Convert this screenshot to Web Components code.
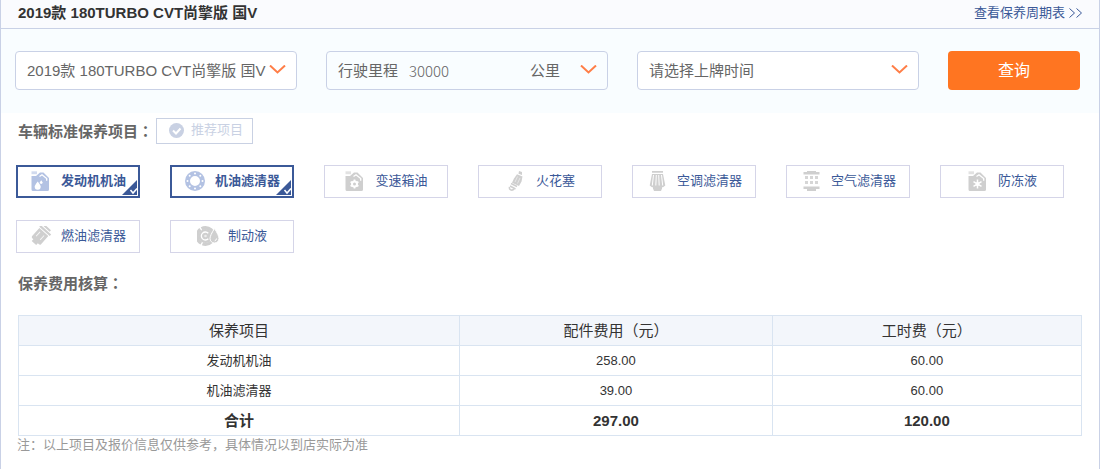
<!DOCTYPE html>
<html lang="zh-CN">
<head>
    <meta charset="UTF-8">
    <title>保养费用</title>
    <style>
        body {
            margin: 0;
            background: #fff;
            color: #333;
            font: 13px/20px "Liberation Sans", "Noto Sans CJK SC", sans-serif;
        }
    </style>
</head>
<body>

<template id="panel-tpl">
    <style>
        :host {
            display: block;
            box-sizing: border-box;
            min-height: 100vh;
            margin-right: 1px;
            border: solid #c9d1e6;
            border-width: 0 1px;
        }

        header {
            display: flex;
            justify-content: space-between;
            align-items: center;
            padding: 0 17px 2px;
            height: 26px;
            background: #fafbfe;
            border-bottom: 1px solid #c9d1e6;
        }
    </style>
    <header>
        <slot name="title"></slot>
        <slot name="link"></slot>
    </header>
    <slot></slot>
</template>

<template id="title-tpl">
    <style>
        :host {
            display: block;
            font-size: 15px;
            font-weight: bold;
        }

        h2 {
            margin: 0;
            font: inherit;
        }
    </style>
    <h2><slot></slot></h2>
</template>

<template id="link-tpl">
    <style>
        :host {
            display: block;
        }

        a {
            display: flex;
            gap: 4px;
            color: #3b5998;
            text-decoration: none;
        }
    </style>
    <a href="#cycle"><slot></slot><svg width="13" height="20" viewBox="0 0 13 20" fill="none" stroke="currentColor" aria-hidden="true"><path d="M.5 5.500l5 4.500-5 4.500M7.500 5.500l5 4.500-5 4.500"/></svg></a>
</template>

<template id="search-tpl">
    <style>
        :host {
            display: block;
            background: #f9fdff;
        }

        form {
            display: grid;
            grid-template-columns: repeat(3, minmax(0, 1fr)) 132px;
            gap: 29px;
            padding: 22px 19px 23px 14px;
        }

        button {
            height: 39px;
            padding: 0;
            border: 0;
            border-radius: 4px;
            background: #ff7521;
            color: #fff;
            font: inherit;
            font-size: 16px;
            cursor: pointer;
        }
    </style>
    <form onsubmit="return false">
        <slot></slot>
        <button>查询</button>
    </form>
</template>

<template id="select-tpl">
    <style>
        :host {
            display: grid;
            align-items: center;
            height: 37px;
            border: 1px solid #c9d1e6;
            border-radius: 4px;
            background: #fff;
        }

        select, svg {
            grid-area: 1 / 1;
        }

        select {
            width: 100%;
            height: 37px;
            padding: 0 11px;
            border: 0;
            outline: 0;
            appearance: none;
            background: none;
            color: #666;
            font: inherit;
            font-size: 15px;
        }

        svg {
            justify-self: end;
            margin-right: 10px;
            pointer-events: none;
        }
    </style>
    <select></select>
    <svg width="17" height="12" viewBox="0 0 17 12" fill="none" stroke="#ff7e47" stroke-width="2" aria-hidden="true"><path d="M1 .5l7.500 7L16 .5"/></svg>
</template>

<template id="mileage-tpl">
    <style>
        :host {
            display: flex;
            align-items: center;
            height: 37px;
            padding: 0 10px 0 11px;
            border: 1px solid #c9d1e6;
            border-radius: 4px;
            color: #666;
            font-size: 15px;
        }

        input {
            flex: 1;
            min-width: 0;
            padding: 0;
            margin: 0 11px;
            border: 0;
            outline: 0;
            background: none;
            color: #666;
            font: 300 15px/20px "Noto Sans CJK SC", sans-serif;
        }

        svg {
            margin-left: 20px;
        }
    </style>
    <label for="mileage">行驶里程</label>
    <input id="mileage" type="text" value="30000">
    <span>公里</span>
    <svg width="17" height="12" viewBox="0 0 17 12" fill="none" stroke="#ff7e47" stroke-width="2" aria-hidden="true"><path d="M1 .5l7.500 7L16 .5"/></svg>
</template>

<template id="section-tpl">
    <style>
        :host {
            display: block;
            padding: 4px 17px 0;
        }

        .head {
            display: flex;
            align-items: center;
            height: 28px;
        }

        h3 {
            margin: 0;
            color: #666;
            font-size: 15px;
        }

        /* full-width colon sits in the middle of its box */
        h3 span {
            font-family: "Noto Sans CJK TC", sans-serif;
        }
    </style>
    <div class="head">
        <h3><slot name="name"></slot><span lang="zh-TW">：</span></h3>
        <slot name="action"></slot>
    </div>
    <slot></slot>
</template>

<template id="recommend-tpl">
    <style>
        :host {
            display: block;
            margin-left: 3px;
        }

        button {
            display: flex;
            align-items: center;
            gap: 6px;
            height: 26px;
            padding: 0 9px 2px 11px;
            border: 1px solid #c9d1e3;
            background: #fff;
            color: #c9d1e3;
            font: inherit;
        }
    </style>
    <button type="button"><svg width="17" height="16" viewBox="0 0 17 16" aria-hidden="true"><circle cx="8.500" cy="8.500" r="7.500" fill="#c9d1e3"/><path d="M5 8.500l3 3 4.500-5" fill="none" stroke="#fff" stroke-width="2"/></svg><slot></slot></button>
</template>

<template id="list-tpl">
    <style>
        :host {
            display: grid;
            grid-template-columns: repeat(auto-fill, 124px);
            gap: 22px 30px;
            margin: 20px 0 17px -2px;
        }
    </style>
    <slot></slot>
</template>

<template id="item-tpl">
    <style>
        :host {
            display: block;
        }

        label {
            display: flex;
            position: relative;
            box-sizing: border-box;
            justify-content: center;
            align-items: center;
            gap: 9px;
            height: 33px;
            padding-bottom: 2px;
            border: 1px solid #d5d5e8;
            color: #3b5998;
            white-space: nowrap;
            cursor: pointer;
        }

        input {
            position: absolute;
            opacity: 0;
            margin: 0;
        }

        .icon {
            flex: none;
            color: #cfcfcf;
        }

        .corner {
            display: none;
            position: absolute;
            right: 1px;
            bottom: 1px;
        }

        label:has(:checked) {
            border: 2px solid #3b5998;
            font-weight: bold;
        }

        :checked ~ .icon {
            color: #b3c2e3;
        }

        :checked ~ .corner {
            display: block;
        }
    </style>
    <label>
        <input type="checkbox">
        <svg class="icon" width="22" height="20" viewBox="0 0 22 20" fill="currentColor" aria-hidden="true"></svg>
        <slot></slot>
        <svg class="corner" width="15" height="15" viewBox="0 0 15 15" aria-hidden="true"><path d="M15 0v15H0z" fill="#3b5998"/><path d="M8.500 10l2.500 3 4-4.500" fill="none" stroke="#fff" stroke-width="1.500"/></svg>
    </label>
</template>

<template id="cost-tpl">
    <style>
        :host {
            display: block;
            margin-top: 18px;
        }

        table {
            width: 100%;
            border-collapse: collapse;
            table-layout: fixed;
            text-align: center;
        }

        th, td {
            height: 29px;
            padding: 0;
            border: 1px solid #d9e4f1;
        }

        th {
            background: #f3f6fb;
            font-size: 15px;
            font-weight: normal;
        }

        th:first-child {
            width: 41.4%;
        }

        th:last-child {
            width: 29%;
        }

        tfoot td {
            font-size: 15px;
            font-weight: bold;
        }

        p {
            margin: -1px 0 0 -1px;
            color: #999;
        }
    </style>
    <table>
        <thead>
        <tr>
            <th>保养项目</th>
            <th>配件费用（元）</th>
            <th>工时费（元）</th>
        </tr>
        </thead>
        <tbody></tbody>
        <tfoot></tfoot>
    </table>
    <p><slot></slot></p>
</template>

<service-panel>
    <panel-title slot="title">2019款 180TURBO CVT尚擎版 国V</panel-title>
    <more-link slot="link">查看保养周期表</more-link>
    <search-bar>
        <select-box label="车型" text="2019款 180TURBO CVT尚擎版 国V"></select-box>
        <mileage-box></mileage-box>
        <select-box label="上牌时间" text="请选择上牌时间"></select-box>
    </search-bar>
    <panel-section>
        <span slot="name">车辆标准保养项目</span>
        <recommend-button slot="action">推荐项目</recommend-button>
        <item-list>
            <service-item icon="oil" checked>发动机机油</service-item>
            <service-item icon="filter" checked>机油滤清器</service-item>
            <service-item icon="gearbox">变速箱油</service-item>
            <service-item icon="plug">火花塞</service-item>
            <service-item icon="cabin">空调滤清器</service-item>
            <service-item icon="air">空气滤清器</service-item>
            <service-item icon="coolant">防冻液</service-item>
            <service-item icon="fuel">燃油滤清器</service-item>
            <service-item icon="brake">制动液</service-item>
        </item-list>
    </panel-section>
    <panel-section style="padding-top: 0; margin-top: -1px">
        <span slot="name">保养费用核算</span>
        <cost-table>注：以上项目及报价信息仅供参考，具体情况以到店实际为准</cost-table>
    </panel-section>
</service-panel>

<script>
    const can = '<path d="M1.500.3H7v2.900H1.500z" opacity=".6"/><path d="M1.500 5h4.500L10 1.500h3.500L19 7v11.500q0 1.500-1.500 1.500H3q-1.500 0-1.500-1.500z"/><path d="M9.500 5.500L12 3.800l4.700 3.700v2.300" fill="none" stroke="#fff" stroke-width="1.300"/>';

    const icons = {
        oil: can + '<path d="M7.700 10.500q3 3.700 3 5.200a3 3 0 0 1-6 0q0-1.500 3-5.200z" fill="#fff"/><path d="M11.200 9.200q1.400 1.700 1.400 2.400a1.400 1.400 0 0 1-2.800 0q0-.7 1.400-2.400z" fill="#fff"/>',
        filter: '<circle cx="11" cy="10" r="7.500" fill="none" stroke="currentColor" stroke-width="5"/><g fill="#fff"><circle cx="11" cy="2.500" r="1"/><circle cx="16.300" cy="4.700" r="1"/><circle cx="18.500" cy="10" r="1"/><circle cx="16.300" cy="15.300" r="1"/><circle cx="11" cy="17.500" r="1"/><circle cx="5.700" cy="15.300" r="1"/><circle cx="3.500" cy="10" r="1"/><circle cx="5.700" cy="4.700" r="1"/></g>',
        gearbox: can + '<circle cx="10.500" cy="13" r="2.500" fill="none" stroke="#fff" stroke-width="2"/><path d="M10.500 8.500v2m0 5v2M6.600 10.700l1.700 1m4.400 2.600l1.700 1m0-4.600l-1.700 1m-4.400 2.600l-1.700 1" fill="none" stroke="#fff" stroke-width="1.800"/>',
        plug: '<path d="M14 0l3 1v3l-3.500-1.200z"/><path d="M12 3.200l5.500 2.300-1 5-2.500 4.500-7-3.200 2-4.300z"/><path d="M6 12.500l6 3M5 15l5.500 3" stroke="currentColor" stroke-width="1.500"/><path d="M4.500 16q-.5 2.500 1.500 3t3-1" fill="none" stroke="currentColor" stroke-width="1.500"/><path d="M12.500 5.500L10 11m5-4l-2.500 5.500" stroke="#fff" opacity=".5"/>',
        cabin: '<path d="M6 0h11v1.700H6zM6 3h11l2.300 11.500-2.300 1.800H6l-2.300-1.800z"/><path d="M7 16h9v1.500l-1 2.500H8l-1-2.500z"/><path d="M7.500 4L6.300 14.500M10.300 4l-.5 10.500M12.700 4l.5 10.500M15.500 4l1.200 10.500" stroke="#fff" stroke-width="1"/>',
        air: '<path d="M7 0h9v1h3.500v2.500h-16V1H7zM3.500 15.500h16V18H16v2H7v-2H3.500z"/><g opacity=".85"><path d="M5 5h3v3H5zm5 0h3v3h-3zm5 0h3v3h-3zM5 10h3v3H5zm5 0h3v3h-3zm5 0h3v3h-3z"/></g>',
        coolant: can + '<path d="M10.500 8.500v9M6.500 10.700l8 4.600m0-4.600l-8 4.600" stroke="#fff" stroke-width="1.500"/><circle cx="10.500" cy="13" r="2" fill="#fff"/>',
        fuel: '<g transform="rotate(42 11 10)"><path d="M6.500-1h8v2h-8zM3.500 2h14v2.200h-14z"/><path d="M4.500 5.200h12V16q0 1.500-1.500 1.500h-1.500V20h-6v-2.500H6q-1.500 0-1.500-1.500z"/><path d="M7.500 7.500v6m5.500-6v6" stroke="#fff" opacity=".8"/></g>',
        brake: '<circle cx="8.500" cy="10" r="8.300" fill="none" stroke="currentColor" stroke-width="3.400" stroke-dasharray="16 1.380"/><circle cx="8.500" cy="10" r="7"/><path d="M11.300 7.300a4 4 0 1 0 0 5.400" fill="none" stroke="#fff" stroke-width="1.300"/><circle cx="8.500" cy="10" r="1.300" fill="#fff" opacity=".6"/><path d="M17.500 2.500q4.500 7 4.500 10a4.500 4.500 0 0 1-9 0q0-3 4.500-10z" stroke="#fff"/><path d="M19.500 12.500q0 1.800-1.800 2.300" fill="none" stroke="#fff"/>'
    };

    const costs = [
        ['发动机机油', 258, 60],
        ['机油滤清器', 39, 60]
    ];

    class BaseElement extends HTMLElement {
        constructor() {
            super();
            const tpl = document.getElementById(this.constructor.tpl);
            this.attachShadow({mode: 'open'}).appendChild(document.importNode(tpl.content, true));
        }
    }

    class SelectBox extends BaseElement {
        static tpl = 'select-tpl';

        connectedCallback() {
            const select = this.shadowRoot.querySelector('select');
            select.setAttribute('aria-label', this.getAttribute('label'));
            select.replaceChildren(new Option(this.getAttribute('text')));
        }
    }

    class ServiceItem extends BaseElement {
        static tpl = 'item-tpl';

        connectedCallback() {
            this.shadowRoot.querySelector('input').checked = this.hasAttribute('checked');
            this.shadowRoot.querySelector('.icon').innerHTML = icons[this.getAttribute('icon')];
        }
    }

    class CostTable extends BaseElement {
        static tpl = 'cost-tpl';

        connectedCallback() {
            const row = (name, parts, work) =>
                `<tr><td>${name}</td><td>${parts.toFixed(2)}</td><td>${work.toFixed(2)}</td></tr>`;
            const sum = (i) => costs.reduce((total, cost) => total + cost[i], 0);

            this.shadowRoot.querySelector('tbody').innerHTML = costs.map((cost) => row(...cost)).join('');
            this.shadowRoot.querySelector('tfoot').innerHTML = row('合计', sum(1), sum(2));
        }
    }

    customElements.define('service-panel', class extends BaseElement { static tpl = 'panel-tpl'; });
    customElements.define('panel-title', class extends BaseElement { static tpl = 'title-tpl'; });
    customElements.define('more-link', class extends BaseElement { static tpl = 'link-tpl'; });
    customElements.define('search-bar', class extends BaseElement { static tpl = 'search-tpl'; });
    customElements.define('mileage-box', class extends BaseElement { static tpl = 'mileage-tpl'; });
    customElements.define('panel-section', class extends BaseElement { static tpl = 'section-tpl'; });
    customElements.define('recommend-button', class extends BaseElement { static tpl = 'recommend-tpl'; });
    customElements.define('item-list', class extends BaseElement { static tpl = 'list-tpl'; });
    customElements.define('select-box', SelectBox);
    customElements.define('service-item', ServiceItem);
    customElements.define('cost-table', CostTable);
</script>
</body>
</html>
